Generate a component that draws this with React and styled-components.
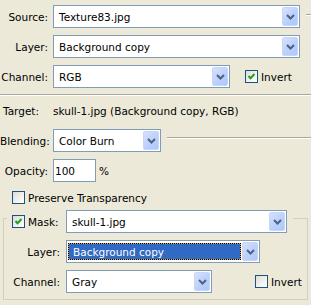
import React from 'react';
import styled, { createGlobalStyle } from 'styled-components';

const GlobalStyle = createGlobalStyle`
  html, body {
    margin: 0;
    padding: 0;
    background: #ece9d8;
  }
`;

const Panel = styled.div`
  width: 311px;
  height: 305px;
  box-sizing: border-box;
  padding-top: 5px;
  display: flex;
  flex-direction: column;
  background: #ece9d8;
  font-family: "DejaVu Sans", sans-serif;
  font-size: 10.5px;
  color: #000;
  overflow: hidden;
`;

const Row = styled.div`
  display: flex;
  align-items: center;
  height: ${(p) => p.$h || 23}px;
  margin-top: ${(p) => (p.$mt === undefined ? 7 : p.$mt)}px;
  padding-left: ${(p) => p.$pl || 0}px;
`;

const Label = styled.span`
  flex-shrink: 0;
  width: ${(p) => p.$w}px;
  margin-right: ${(p) => p.$gap}px;
  text-align: ${(p) => p.$align || 'right'};
  padding-left: ${(p) => p.$pl || 0}px;
  box-sizing: border-box;
  white-space: nowrap;
`;

const SelectBox = styled.div`
  flex-shrink: 0;
  width: ${(p) => p.$w}px;
  height: 23px;
  box-sizing: border-box;
  border: 1px solid #7f9db9;
  background: #fff;
  padding: 1px;
  display: flex;
  align-items: center;
`;

const SelectText = styled.div`
  flex: 1;
  padding-left: 4px;
  white-space: nowrap;
  overflow: hidden;
`;

const SelectedText = styled.div`
  flex: 1;
  height: 17px;
  margin-right: 1px;
  box-sizing: border-box;
  padding-left: 4px;
  display: flex;
  align-items: center;
  color: #fff;
  border: 1px dotted #000;
  background: linear-gradient(#316ac5, #316ac5) padding-box,
    linear-gradient(#d9a94c, #d9a94c) border-box;
  white-space: nowrap;
`;

const ArrowButton = styled.div`
  width: 16px;
  height: 19px;
  box-sizing: border-box;
  border: 1px solid #c6d5fa;
  border-radius: 2px;
  background: linear-gradient(135deg, #d6e2fe 0%, #bcd0fb 55%, #b0c7f8 100%);
  display: flex;
  align-items: center;
  justify-content: center;
`;

const TextInput = styled.div`
  flex-shrink: 0;
  width: ${(p) => p.$w}px;
  height: 23px;
  box-sizing: border-box;
  border: 1px solid #7f9db9;
  background: #fff;
  padding-left: 1px;
  display: flex;
  align-items: center;
`;

const CheckBox = styled.div`
  flex-shrink: 0;
  width: 13px;
  height: 13px;
  box-sizing: border-box;
  border: 1px solid #1c5180;
  background: linear-gradient(135deg, #dcdcd7 0%, #f2f2ef 60%, #fff 100%);
  margin-left: ${(p) => p.$ml || 0}px;
  margin-right: 3px;
  display: flex;
  align-items: center;
  justify-content: center;
`;

const Etch = styled.div`
  flex: 1;
  align-self: flex-start;
  margin-top: ${(p) => p.$top}px;
  margin-left: 6px;
  border-top: 1px solid #aca899;
  border-bottom: 1px solid #fff;
`;

const Separator = styled.div`
  border-top: 1px solid #aca899;
  border-bottom: 1px solid #fff;
  margin-top: 6px;
`;

const Unit = styled.span`
  margin-left: 3px;
`;

const Group = styled.div`
  margin: 14px 0 0 3px;
  width: 305px;
  box-sizing: border-box;
  border: 1px solid #d0d0bf;
  padding-bottom: 6px;
  display: flex;
  flex-direction: column;
`;

const GroupHeader = styled.div`
  display: flex;
  align-items: center;
  align-self: flex-start;
  height: 23px;
  margin: -9px 0 0 3px;
  padding: 0 6px 0 5px;
  background: #ece9d8;
`;

const HeaderLabel = styled.div`
  width: 54px;
  display: flex;
  align-items: center;
`;

const Chevron = () => (
  <svg width="9" height="6" viewBox="0 0 9 6">
    <path d="M1 1 L4.5 4.5 L8 1" fill="none" stroke="#4d6185" strokeWidth="2" />
  </svg>
);

const Check = () => (
  <svg width="11" height="11" viewBox="0 0 11 11">
    <path d="M2.5 5 L4.5 7.2 L8.5 3" fill="none" stroke="#21a121" strokeWidth="2" />
  </svg>
);

const Select = ({ width, value, selected }) => (
  <SelectBox $w={width}>
    {selected ? <SelectedText>{value}</SelectedText> : <SelectText>{value}</SelectText>}
    <ArrowButton>
      <Chevron />
    </ArrowButton>
  </SelectBox>
);

const Checkbox = ({ checked, ml }) => (
  <CheckBox $ml={ml}>{checked && <Check />}</CheckBox>
);

export default function App() {
  return (
    <>
      <GlobalStyle />
      <Panel>
        <Row $mt={0}>
          <Label $w={48} $gap={5}>Source:</Label>
          <Select width={247} value="Texture83.jpg" />
          <Etch $top={9} />
        </Row>
        <Row>
          <Label $w={48} $gap={5}>Layer:</Label>
          <Select width={247} value="Background copy" />
        </Row>
        <Row>
          <Label $w={48} $gap={5}>Channel:</Label>
          <Select width={177} value="RGB" />
          <Checkbox checked ml={15} />
          <span>Invert</span>
        </Row>

        <Separator />

        <Row $mt={3}>
          <Label $w={48} $gap={5} $align="left" $pl={3}>Target:</Label>
          <span>skull-1.jpg (Background copy, RGB)</span>
        </Row>
        <Row>
          <Label $w={48} $gap={5}>Blending:</Label>
          <Select width={108} value="Color Burn" />
          <Etch $top={8} />
        </Row>
        <Row>
          <Label $w={48} $gap={5}>Opacity:</Label>
          <TextInput $w={43}>100</TextInput>
          <Unit>%</Unit>
        </Row>
        <Row $mt={9} $h={13} $pl={12}>
          <Checkbox />
          <span>Preserve Transparency</span>
        </Row>

        <Group>
          <GroupHeader>
            <HeaderLabel>
              <Checkbox checked />
              <span>Mask:</span>
            </HeaderLabel>
            <Select width={221} value="skull-1.jpg" />
          </GroupHeader>
          <Row>
            <Label $w={56} $gap={6}>Layer:</Label>
            <Select width={194} value="Background copy" selected />
          </Row>
          <Row>
            <Label $w={56} $gap={6}>Channel:</Label>
            <Select width={146} value="Gray" />
            <Checkbox ml={43} />
            <span>Invert</span>
          </Row>
        </Group>
      </Panel>
    </>
  );
}
